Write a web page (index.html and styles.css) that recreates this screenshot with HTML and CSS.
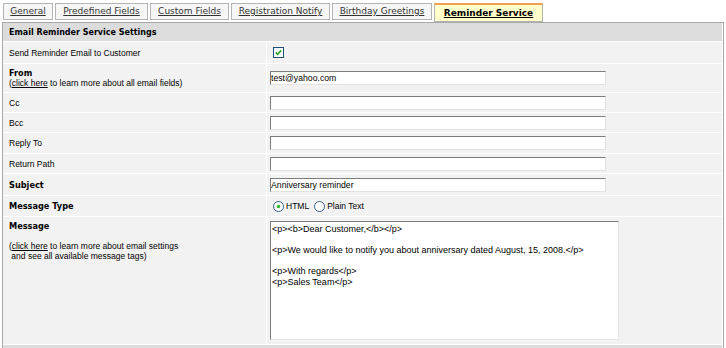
FILE: index.html
```html
<!DOCTYPE html>
<html lang="en">
<head>
  <meta charset="UTF-8">
  <title>Email Reminder Service Settings</title>
  <link rel="stylesheet" href="styles.css">
</head>
<body>

  <div class="tabs">
    <a class="tab tab-general" href="#">General</a>
    <a class="tab tab-predefined" href="#">Predefined Fields</a>
    <a class="tab tab-custom" href="#">Custom Fields</a>
    <a class="tab tab-registration" href="#">Registration Notify</a>
    <a class="tab tab-birthday" href="#">Birthday Greetings</a>
    <a class="tab tab-reminder active" href="#">Reminder Service</a>
  </div>

  <div class="panel">
    <table class="settings">
      <tr class="row-head">
        <td colspan="2">Email Reminder Service Settings</td>
      </tr>
      <tr class="row-send">
        <td class="label">Send Reminder Email to Customer</td>
        <td class="value">
          <span class="check">
            <svg width="11" height="11" viewBox="0 0 11 11">
              <rect x="0.5" y="0.5" width="10" height="10" fill="#fff" stroke="#1f4e7a"/>
              <path d="M2.8 5.4 L4.6 7.3 L8.2 3.4" fill="none" stroke="#22a822" stroke-width="1.6"/>
            </svg>
          </span>
        </td>
      </tr>
      <tr class="row-from">
        <td class="label top">
          <b>From</b><br>
          (<a href="#">click here</a> to learn more about all email fields)
        </td>
        <td class="value"><input class="field" type="text" value="test@yahoo.com"></td>
      </tr>
      <tr class="row-cc">
        <td class="label">Cc</td>
        <td class="value"><input class="field" type="text"></td>
      </tr>
      <tr class="row-bcc">
        <td class="label">Bcc</td>
        <td class="value"><input class="field" type="text"></td>
      </tr>
      <tr class="row-reply">
        <td class="label">Reply To</td>
        <td class="value"><input class="field" type="text"></td>
      </tr>
      <tr class="row-return">
        <td class="label">Return Path</td>
        <td class="value"><input class="field" type="text"></td>
      </tr>
      <tr class="row-subject">
        <td class="label"><b>Subject</b></td>
        <td class="value"><input class="field" type="text" value="Anniversary reminder"></td>
      </tr>
      <tr class="row-type">
        <td class="label"><b>Message Type</b></td>
        <td class="value">
          <div class="radios">
            <label class="radio">
              <svg width="11" height="11" viewBox="0 0 11 11">
                <circle cx="5.5" cy="5.5" r="5" fill="#fff" stroke="#375f88"/>
                <circle cx="5.5" cy="5.5" r="1.8" fill="#3cb43c"/>
              </svg>
              HTML
            </label>
            <label class="radio">
              <svg width="11" height="11" viewBox="0 0 11 11">
                <circle cx="5.5" cy="5.5" r="5" fill="#fff" stroke="#375f88"/>
              </svg>
              Plain Text
            </label>
          </div>
        </td>
      </tr>
      <tr class="row-message">
        <td class="label top">
          <b>Message</b>
          <p class="hint">(<a href="#">click here</a> to learn more about email settings<br>&nbsp;and see all available message tags)</p>
        </td>
        <td class="value top">
          <textarea class="message" readonly>&lt;p&gt;&lt;b&gt;Dear Customer,&lt;/b&gt;&lt;/p&gt;

&lt;p&gt;We would like to notify you about anniversary dated August, 15, 2008.&lt;/p&gt;

&lt;p&gt;With regards&lt;/p&gt;
&lt;p&gt;Sales Team&lt;/p&gt;</textarea>
        </td>
      </tr>
      <tr class="row-foot">
        <td colspan="2"></td>
      </tr>
    </table>
  </div>

</body>
</html>
```

FILE: styles.css
```css
/* Basic Reset */
* {
  box-sizing: border-box;
  margin: 0;
  padding: 0;
}

body {
  background-color: #fff;
  padding: 3px 0 0 2px;
  font-family: "Liberation Sans", Arial, sans-serif;
  font-size: 8.5px;
  color: #000;
}

a {
  color: #000;
}

/* Tabs */
.tabs {
  display: flex;
  align-items: flex-start;
  gap: 2px;
  height: 19px;
  padding-left: 1px;
}

.tab {
  height: 17px;
  border: 1px solid #b4b4b4;
  background-color: #f6f6f6;
  font-family: "DejaVu Sans", sans-serif;
  font-size: 9px;
  line-height: 15px;
  text-align: center;
  white-space: nowrap;
  color: #333;
}

.tab-general { width: 50px; }
.tab-predefined { width: 93px; }
.tab-custom { width: 79px; }
.tab-registration { width: 99px; }
.tab-birthday { width: 100px; }
.tab-reminder { width: 109px; }

.tab.active {
  height: 19px;
  border-top: 2px solid #f0a050;
  background-color: #ffffcc;
  font-weight: bold;
  line-height: 17px;
  color: #000;
}

/* Settings panel */
.panel {
  width: 722px;
  border: 1px solid #a8a8a8;
  padding-right: 1px;
  background-color: #fff;
}

.settings {
  width: 100%;
  border-collapse: separate;
  border-spacing: 0;
}

.settings td {
  background-color: #f2f2f2;
  border-bottom: 1px solid #fff;
  padding: 0 6px;
  vertical-align: middle;
}

.settings td.label {
  width: 264px;
  border-right: 1px solid #fff;
}

.settings td.value {
  padding-left: 3px;
}

.settings td.top {
  vertical-align: top;
  padding-top: 4px;
  line-height: 10px;
}

.settings b {
  font-family: "DejaVu Sans", sans-serif;
  font-size: 8.2px;
}

.row-head td {
  height: 19px;
  background-color: #dcdcdc;
  font-family: "DejaVu Sans", sans-serif;
  font-size: 8px;
  font-weight: bold;
}

.row-send td { height: 22px; }
.row-from td { height: 29px; }
.row-cc td { height: 20px; }
.row-bcc td { height: 20px; }
.row-reply td { height: 21px; }
.row-return td { height: 20px; }
.row-subject td { height: 22px; }
.row-type td { height: 21px; }
.row-message td { height: 128px; }

.row-foot td {
  height: 10px;
  background-color: #dcdcdc;
}

.check {
  display: block;
  width: 11px;
  height: 11px;
  margin-left: 3px;
}

.check svg,
.radio svg {
  display: block;
}

.field {
  display: block;
  width: 336px;
  height: 14px;
  border: 1px solid;
  border-color: #7c7c7c #e2e2e2 #e2e2e2 #7c7c7c;
  background-color: #fff;
  padding: 0;
  font-family: "Liberation Sans", Arial, sans-serif;
  font-size: 8.7px;
  color: #000;
  outline: none;
}

.radios {
  display: flex;
  align-items: center;
  gap: 5px;
  padding-left: 3px;
}

.radio {
  display: flex;
  align-items: center;
  gap: 2px;
}

.hint {
  margin-top: 10px;
}

.message {
  display: block;
  width: 349px;
  height: 119px;
  border: 1px solid;
  border-color: #7c7c7c #e6e6e6 #e6e6e6 #7c7c7c;
  background-color: #fff;
  padding: 2px 1px;
  font-family: "Liberation Sans", Arial, sans-serif;
  font-size: 9px;
  line-height: 10.5px;
  color: #000;
  resize: none;
  overflow: hidden;
  outline: none;
}
```
